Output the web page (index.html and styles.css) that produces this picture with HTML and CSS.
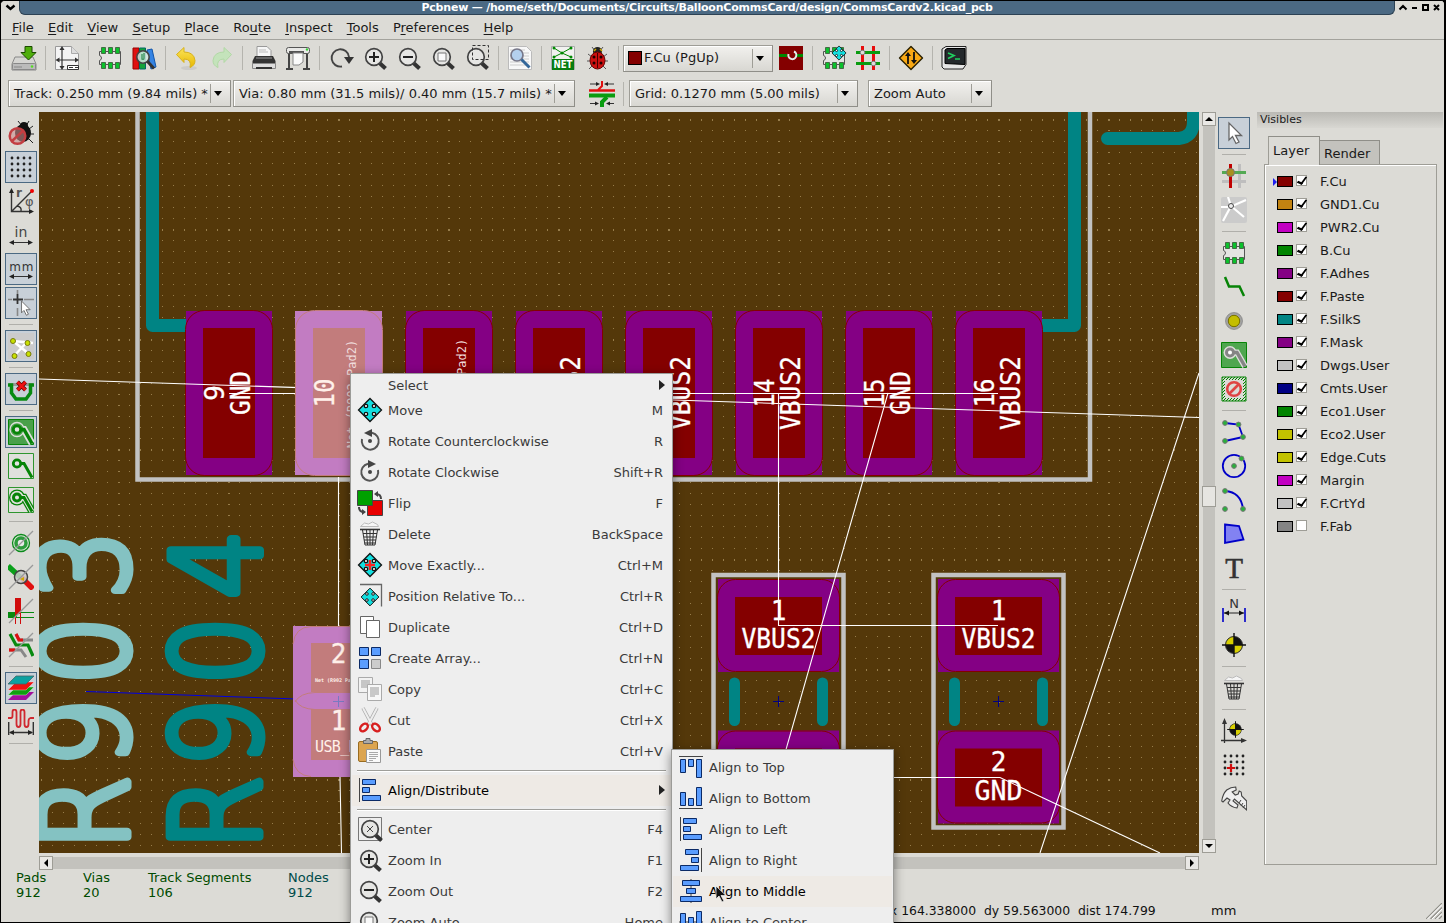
FILE: index.html
```
<!DOCTYPE html>
<html lang="en">
<head>
<meta charset="utf-8">
<title>Pcbnew</title>
<link rel="stylesheet" href="styles.css">
</head>
<body>
<svg class="sprite" width="0" height="0">
<defs>
<linearGradient id="gy" x1="0" y1="0" x2="0" y2="1"><stop offset="0" stop-color="#fae45a"/><stop offset="1" stop-color="#e9b800"/></linearGradient>
<pattern id="hatch" width="3" height="3" patternUnits="userSpaceOnUse"><path d="M0 3L3 0" stroke="#008400" stroke-width="1"/></pattern>
</defs>
<symbol id="save" viewBox="0 0 26 26"><path d="M4 12h18l3 7v6H1v-6z" fill="#d5d5d2" stroke="#888" /><rect x="1.500" y="18.500" width="23" height="6" rx="1" fill="#bbb" stroke="#888"/><path d="M4 21v2m2-2v2m2-2v2m2-2v2" stroke="#888"/><circle cx="21" cy="21.500" r="1.200" fill="#5d2"/><path d="M14 1.500h7v6h4l-7.500 7.500L10 7.500h4z" fill="#4fae0c" stroke="#1b4a00"/></symbol>
<symbol id="page" viewBox="0 0 26 26"><path d="M1.500 1.500h16l7 7v16h-23z" fill="#f4f4f4" stroke="#999"/><path d="M17.500 1.500v7h7" fill="#ddd" stroke="#aaa"/><path d="M8 3v20M3 15h20" stroke="#333" stroke-width="1.200"/><path d="M8 1l2.500 4h-5zM8 25l2.500-4h-5zM1.500 15l4-2.500v5zM25 15l-4-2.500v5z" fill="#333"/><path d="M13.500 20.500h11v4h-11zM15 22.500h4m2 0h3" stroke="#333" fill="#fff"/></symbol>
<symbol id="chip" viewBox="0 0 26 26"><path d="M2.500 6.500h21v13h-21v-4q2-.5 2-2.500t-2-2.500z" fill="#e4e4e2" stroke="#555"/><g fill="#0bc12c" stroke="#456b45"><path d="M4.500 2.500h4v6h-4zM11.500 2.500h4v6h-4zM18.500 2.500h4v6h-4zM4.500 17.500h4v6h-4zM11.500 17.500h4v6h-4zM18.500 17.500h4v6h-4z"/></g></symbol>
<symbol id="lib" viewBox="0 0 26 26"><path d="M2 3h6v21H2z" fill="#e01010" stroke="#900"/><path d="M8.500 3h6v21h-6z" fill="#14a33a" stroke="#066"/><path d="M16 5l5-1 4 18-5 2z" fill="#3584e4" stroke="#15a"/><circle cx="12" cy="12" r="6.200" fill="#d2e8e2" fill-opacity=".85" stroke="#444" stroke-width="1.600"/><path d="M11 9v5q2 1 2-1V8" fill="none" stroke="#4a9a6a" stroke-width="1.500"/><path d="M16.500 16.500l6.500 7" stroke="#333" stroke-width="3"/></symbol>
<symbol id="undo" viewBox="0 0 26 26"><ellipse cx="15" cy="23" rx="8" ry="2" fill="#bbb" opacity=".5"/><path d="M2.500 9.500l7.500-7v4.500q10 0 11 8.500 0 5-5 7 2-8.500-6-8.500v3.500z" fill="url(#gy)" stroke="#d8b21a"/></symbol>
<symbol id="redo" viewBox="0 0 26 26"><g opacity=".45"><path d="M23.500 9.500l-7.500-7v4.500q-10 0-11 8.500 0 5 5 7-2-8.500 6-8.500v3.500z" fill="#a8ed9c" stroke="#7fd66b"/></g></symbol>
<symbol id="print" viewBox="0 0 26 26"><path d="M6 1.500h10l4 4v8H6z" fill="#f6f6f6" stroke="#999"/><path d="M8 5h7M8 7h9" stroke="#bbb"/><path d="M4 11h18l2.500 5v3h-23v-3z" fill="#333"/><path d="M5 13h16" stroke="#999"/><path d="M1.500 18.500h23v5h-23z" fill="#ddd" stroke="#888"/><path d="M5 23h16" stroke="#333" stroke-width="2"/></symbol>
<symbol id="plot" viewBox="0 0 26 26"><path d="M4 6v18M22 6v18M1 24h7M18 24h7" stroke="#444" stroke-width="2"/><rect x="1.500" y="2.500" width="23" height="6" rx="2" fill="#e8e8e6" stroke="#555"/><path d="M4 7h15" stroke="#222" stroke-width="1.500"/><circle cx="22" cy="4.500" r="1.200" fill="#3c3"/><path d="M8 8h10v9l-4 3H8z" fill="#fafafa" stroke="#888"/></symbol>
<symbol id="refresh" viewBox="0 0 26 26"><path d="M14 21.500A8.700 8.700 0 1 1 21 12" fill="none" stroke="#444" stroke-width="1.900"/><path d="M16 12h10l-5 7z" fill="#333"/></symbol>
<symbol id="mag" viewBox="0 0 26 26"><path d="M17.500 18l6 5.500" stroke="#333" stroke-width="4"/><circle cx="12" cy="12" r="8.300" fill="#e6e6e4" stroke="#444" stroke-width="1.700"/></symbol>
<symbol id="zin" viewBox="0 0 26 26"><use href="#mag"/><path d="M7 12h10m-5-5v10" stroke="#222" stroke-width="2"/></symbol>
<symbol id="zout" viewBox="0 0 26 26"><use href="#mag"/><path d="M7 12h10" stroke="#222" stroke-width="2"/></symbol>
<symbol id="zfit" viewBox="0 0 26 26"><use href="#mag"/><path d="M8 8h8v8H8z" fill="#fafafa" stroke="#777"/></symbol>
<symbol id="zsel" viewBox="0 0 26 26"><use href="#mag"/><path d="M8.500.500h16v14h-16z" fill="none" stroke="#333" stroke-dasharray="3 2"/></symbol>
<symbol id="zcen" viewBox="0 0 26 26"><path d="M1.500 1.500h23v23h-23z" fill="none" stroke="#777"/><use href="#mag" x="1" y="1"/><path d="M10 10l6 6m0-6l-6 6" stroke="#444"/></symbol>
<symbol id="find" viewBox="0 0 26 26"><path d="M1.500 1.500h18l5 5v18h-23z" fill="#f8f8f8" stroke="#bbb"/><path d="M3 5h15M3 8h19M3 11h19M3 14h19M3 17h19M3 20h19" stroke="#ccc"/><circle cx="10" cy="10" r="6" fill="#b4d0ee" stroke="#778" stroke-width="1.700"/><path d="M14.500 14.500l8 8" stroke="#369" stroke-width="3"/></symbol>
<symbol id="lady" viewBox="0 0 26 26"><path d="M8 2l3 4M19 2l-3 4M4 9l4 3M23 9l-4 3M3 16h4M24 16h-4M5 24l4-4M22 24l-4-4" stroke="#555"/><circle cx="13.500" cy="6.500" r="4.500" fill="#222"/><ellipse cx="13.500" cy="15.500" rx="7.500" ry="8.500" fill="#cc1010" stroke="#600"/><path d="M13.500 8v15" stroke="#400"/><g fill="#200"><circle cx="10" cy="12" r="1.500"/><circle cx="17" cy="12" r="1.500"/><circle cx="10" cy="18" r="1.500"/><circle cx="17" cy="18" r="1.500"/></g><path d="M10 6l2-2m4 0l2 2" stroke="#ca0" stroke-width="1.500"/></symbol>
<symbol id="pair" viewBox="0 0 26 26"><path d="M1 1h24v24H1z" fill="#840000"/><path d="M1 10.500h8M17 10.500h8" stroke="#080" stroke-width="3"/><path d="M16 6.500a4 4 0 1 1-5.500 2.500" fill="none" stroke="#e8e8e8" stroke-width="2"/></symbol>
<symbol id="movex" viewBox="0 0 26 26"><path d="M13 1.500l11.500 11.500L13 24.500 1.500 13z" fill="#12dfe0" stroke="#111" stroke-width="1.300"/><g fill="#fff" stroke="#111" stroke-width="1.300"><circle cx="9" cy="9" r="1.700"/><circle cx="17" cy="9" r="1.700"/><circle cx="9" cy="17" r="1.700"/><circle cx="17" cy="17" r="1.700"/></g></symbol>
<symbol id="movey" viewBox="0 0 26 26"><use href="#movex"/><path d="M13 8v10M8 13h10" stroke="#ff2020" stroke-width="2.500"/></symbol>
<symbol id="posrel" viewBox="0 0 26 26"><path d="M3 1.500h21.500v22" fill="none" stroke="#666" stroke-width="1.300"/><use href="#movex" x="3" y="4" width="20" height="20"/></symbol>
<symbol id="chipm" viewBox="0 0 26 26"><use href="#chip"/><use href="#movex" x="10" y="0" width="16" height="16"/></symbol>
<symbol id="route" viewBox="0 0 26 26"><path d="M7.500 1v24M18.500 1v24" stroke="#e80c0c" stroke-width="3"/><path d="M1 7.500h24M1 18.500h24" stroke="#0a9c10" stroke-width="3"/><circle cx="7.500" cy="7.500" r="2.300" fill="#ddd" stroke="#777"/><circle cx="18.500" cy="18.500" r="2.300" fill="#ddd" stroke="#777"/></symbol>
<symbol id="warn" viewBox="0 0 26 26"><path d="M13 1.500L24.500 13 13 24.500 1.500 13z" fill="#f9a814" stroke="#2a2000" stroke-width="1.400" stroke-linejoin="round"/><path d="M10 19V10M16 7v9" stroke="#111" stroke-width="1.800"/><path d="M7 11l3-4 3 4zM13 15l3 4 3-4z" fill="#111"/></symbol>
<symbol id="term" viewBox="0 0 26 26"><path d="M5 1.500h20v18L22 24H3l-2-2V4z" fill="#e6e6e6" stroke="#222"/><path d="M6 3.500h18v16l-20-1V5z" fill="#24292c" stroke="#000"/><path d="M7 8l6 2.500-6 3M14 14h5" fill="none" stroke="#20d060" stroke-width="1.700"/></symbol>
<symbol id="width" viewBox="0 0 26 26"><path d="M0 9.500h26" stroke="#e01010" stroke-width="2.500"/><path d="M0 14.500h26" stroke="#0a9c10" stroke-width="4"/><path d="M13 0v5l-4 4" stroke="#e01010" stroke-width="2" fill="none"/><path d="M13 26v-5l5-5" stroke="#0a9c10" stroke-width="4" fill="none"/><path d="M1 3h8M25 3h-8M1 22.500h8M25 22.500h-6" stroke="#333"/><path d="M11 3L7 1v4zM15 3l4-2v4zM10 22.500l-4-2v4zM17 22.500l4-2v4z" fill="#222"/></symbol>
<symbol id="nobug" viewBox="0 0 26 26"><path d="M10 1l4 5M21 1l-3 5M21 9l4-3M22 14h4M21 19l4 4" stroke="#222"/><circle cx="16" cy="6" r="4" fill="#111"/><ellipse cx="15" cy="13" rx="8" ry="9" fill="#111"/><circle cx="9.500" cy="16" r="7.800" fill="#c88" fill-opacity=".6" stroke="#c33e42" stroke-width="2.500"/><path d="M4 21L15 11" stroke="#c33e42" stroke-width="2.500"/></symbol>
<symbol id="dots" viewBox="0 0 26 26"><path d="M4 4h.01M10 4h.01M16 4h.01M22 4h.01M4 10h.01M10 10h.01M16 10h.01M22 10h.01M4 16h.01M10 16h.01M16 16h.01M22 16h.01M4 22h.01M10 22h.01M16 22h.01M22 22h.01" stroke="#222" stroke-width="2.800" stroke-linecap="round"/></symbol>
<symbol id="arr" viewBox="0 0 26 26"><path d="M3 20.500h20" stroke="#333"/><path d="M1 20.500L6 18v5zM25 20.500L20 18v5z" fill="#222"/></symbol>
<symbol id="ptr" viewBox="0 0 26 26"><path d="M8 3v17l3.500-3.500 3.500 7 3-1.500-3.500-6.500h6z" fill="#fff" stroke="#666" stroke-width="1.300"/></symbol>
<symbol id="cross" viewBox="0 0 26 26"><path d="M9.500 0v4m0 14v8M0 9.500h4m12 0h10" stroke="#888" stroke-width="1.600"/><path d="M9.500 4v10M5 9.500h10" stroke="#333" stroke-width="1.800"/><use href="#ptr" x="8" y="9" width="18" height="18"/></symbol>
<symbol id="rats" viewBox="0 0 26 26"><path d="M0 0h26v26H0z" fill="#cbcbcb"/><path d="M5 8l20 2M5 8l16 13M19 9L6 23" stroke="#fff" stroke-width="2.500"/><g fill="#c8e000" stroke="#777a10"><circle cx="5" cy="8" r="2.500"/><circle cx="19.500" cy="10" r="2.500"/><circle cx="20.500" cy="21" r="2.500"/><circle cx="6.500" cy="23" r="2.500"/></g></symbol>
<symbol id="ux" viewBox="0 0 26 26"><path d="M1 8.500h24" stroke="#999" stroke-width="3"/><path d="M0 9h3.500v8l4.500 6h10l4.500-6V9H26" fill="none" stroke="#078a10" stroke-width="3.500"/><path d="M9.500 6l8 8m0-8l-8 8" stroke="#600" stroke-width="4"/><path d="M9.500 6l8 8m0-8l-8 8" stroke="#e11" stroke-width="2.500"/></symbol>
<symbol id="zone1" viewBox="0 0 26 26"><path d="M.5.500h25v25H.5z" fill="#4aa04a" stroke="#078407"/><path d="M9 10.500h7l8 14" fill="none" stroke="#dedfdc" stroke-width="7"/><circle cx="9" cy="10.500" r="7" fill="#4aa04a" stroke="#dedfdc" stroke-width="1.300"/><path d="M9 10.500h7l8 14" fill="none" stroke="#078407" stroke-width="3.500"/><circle cx="9" cy="10.500" r="3.700" fill="#e5e5e2" stroke="#078407" stroke-width="2.800"/></symbol>
<symbol id="zone2" viewBox="0 0 26 26"><path d="M.5.500h25v25H.5z" fill="#e0e0dc" stroke="#2f962f"/><path d="M9 10.500h7l8 14" fill="none" stroke="#078407" stroke-width="3"/><circle cx="9" cy="10.500" r="3.700" fill="#e5e5e2" stroke="#078407" stroke-width="2.800"/></symbol>
<symbol id="zone3" viewBox="0 0 26 26"><path d="M.5.500h25v25H.5z" fill="#e0e0dc" stroke="#2f962f"/><path d="M9 10.500h7l8 14" fill="none" stroke="#078407" stroke-width="7.500"/><circle cx="9" cy="10.500" r="8" fill="#078407"/><path d="M9 10.500h7l8 14" fill="none" stroke="#e0e0dc" stroke-width="5"/><circle cx="9" cy="10.500" r="6.700" fill="#e0e0dc"/><path d="M9 10.500h7l8 14" fill="none" stroke="#078407" stroke-width="3"/><circle cx="9" cy="10.500" r="3.500" fill="#e5e5e2" stroke="#078407" stroke-width="3"/></symbol>
<symbol id="sl" viewBox="0 0 26 26"><path d="M1 25L25 1" stroke="#999" stroke-width="1.300"/></symbol>
<symbol id="via" viewBox="0 0 26 26"><circle cx="13" cy="13" r="8.500" fill="#d9e5d5" stroke="#0a8a1a" stroke-width="1.300"/><circle cx="13" cy="13" r="5" fill="#e8e8e8" stroke="#2d9c3c" stroke-width="3.500"/><use href="#sl"/></symbol>
<symbol id="trk" viewBox="0 0 26 26"><path d="M0 2l12 11" stroke="#0aa01a" stroke-width="5.500"/><path d="M13 13l12 12" stroke="#e01010" stroke-width="5.500"/><circle cx="13" cy="13" r="6.500" fill="#ccc" fill-opacity=".85" stroke="#444" stroke-width="1.500"/><path d="M12 15l4-2v4z" fill="#ca0"/><use href="#sl"/></symbol>
<symbol id="crs" viewBox="0 0 26 26"><path d="M0 17h9" stroke="#078a10" stroke-width="6"/><path d="M9 14.500h17M9 19.500h17" stroke="#078a10"/><path d="M10 0v16" stroke="#d00c0c" stroke-width="6"/><path d="M7.500 15v11M12.500 15v11" stroke="#d00c0c"/><use href="#sl"/></symbol>
<symbol id="dp" viewBox="0 0 26 26"><path d="M8 2l3 6h14" fill="none" stroke="#888" stroke-width="3"/><path d="M8 2l3 6h4" fill="none" stroke="#d11" stroke-width="3.200"/><path d="M1 18h12l5 7" fill="none" stroke="#888" stroke-width="3"/><path d="M1 18h6" stroke="#d11" stroke-width="3.200"/><path d="M2 2l6 11h12l5 11" fill="none" stroke="#078a10" stroke-width="3.200"/><use href="#sl"/></symbol>
<symbol id="stack" viewBox="0 0 26 26"><path d="M8 17h18l-8 8H0z" fill="#a2109c"/><path d="M8 12h18l-8 8H0z" fill="#10a010" stroke="#dfd" stroke-width=".4"/><path d="M8 7h18l-8 8H0z" fill="#f01010" stroke="#fdd" stroke-width=".4"/><path d="M8 1h18l-8 8H0z" fill="#0da0a0" stroke="#466" stroke-width=".8"/></symbol>
<symbol id="wave" viewBox="0 0 26 26"><path d="M0 9h3q1.500 0 1.500-2V3q0-2.500 2-2.500T8.500 3v12q0 3 2 3t2-3V3q0-2.500 2-2.500t2 2.500v12q0 3 2 3t2-3v-3q0-2.500 2-3H26" fill="none" stroke="#d02830" stroke-width="1.800"/><path d="M.7 13v13M25.300 13v13M2 23.500h22" stroke="#333" stroke-width="1.400"/><path d="M1 23.500l5-2.500v5zM25 23.500l-5-2.500v5z" fill="#222"/></symbol>
<symbol id="netx" viewBox="0 0 26 26"><path d="M18.500 1v24M1 18.500h24" stroke="#bebebe" stroke-width="3"/><path d="M1 9.500h24" stroke="#54aa54" stroke-width="3"/><path d="M9.500 1v24" stroke="#c00000" stroke-width="3"/><circle cx="9.500" cy="9.500" r="4" fill="#a89020" stroke="#777"/></symbol>
<symbol id="lrat" viewBox="0 0 26 26"><rect width="26" height="26" rx="2" fill="#cbcbcb"/><path d="M0 10h9L25 3M10 9l13 11M10 9L2 24M10 9L7 0" stroke="#fff" stroke-width="2.200" fill="none"/><circle cx="10" cy="9" r="2.500" fill="#eee" stroke="#444"/></symbol>
<symbol id="track" viewBox="0 0 26 26"><path d="M4 3l4 9.500h10.500L23 22" fill="none" stroke="#078407" stroke-width="2.500"/></symbol>
<symbol id="vy" viewBox="0 0 26 26"><circle cx="13" cy="13" r="7.200" fill="#c4be00" stroke="#a2a2a2" stroke-width="2.600"/><circle cx="13" cy="13" r="8.500" fill="none" stroke="#777" stroke-width=".6"/><circle cx="13" cy="13" r="5.700" fill="none" stroke="#777000" stroke-width="1"/></symbol>
<symbol id="zadd" viewBox="0 0 26 26"><path d="M.5.500h25v25H.5z" fill="#4fa64f" stroke="#078407"/><path d="M9 10.500h7l8 14" fill="none" stroke="#dedfdc" stroke-width="6"/><circle cx="9" cy="10.500" r="6.500" fill="#dedfdc"/><path d="M9 10.500h7l8 14" fill="none" stroke="#858585" stroke-width="3.500"/><circle cx="9" cy="10.500" r="3.500" fill="#fff" stroke="#858585" stroke-width="3"/></symbol>
<symbol id="keep" viewBox="0 0 26 26"><path d="M1 1h24v24H1z" fill="url(#hatch)" stroke="#078407"/><path d="M4 4h18v18H4z" fill="#dcdbd7"/><circle cx="13" cy="13" r="6.800" fill="none" stroke="#df4444" stroke-width="2.600"/><path d="M8 18L18 8" stroke="#df4444" stroke-width="2.600"/></symbol>
<symbol id="line" viewBox="0 0 26 26"><path d="M4 4l13.500 1.500L22 18 4 22" fill="none" stroke="#0000c8" stroke-width="1.800"/><g fill="#29b03b" stroke="#777"><circle cx="4" cy="4" r="2.400"/><circle cx="17.500" cy="5.500" r="2.400"/><circle cx="22" cy="18" r="2.400"/><circle cx="4" cy="22" r="2.400"/></g></symbol>
<symbol id="circ" viewBox="0 0 26 26"><circle cx="13" cy="13" r="11.200" fill="none" stroke="#0000c8" stroke-width="1.800"/><g fill="#29b03b" stroke="#777"><circle cx="13" cy="13" r="2.400"/><circle cx="20.500" cy="5.500" r="2.400"/></g></symbol>
<symbol id="arc" viewBox="0 0 26 26"><path d="M4 4q16 1 18 18" fill="none" stroke="#0000c8" stroke-width="1.800"/><g fill="#29b03b" stroke="#777"><circle cx="4" cy="4" r="2.400"/><circle cx="22" cy="22" r="2.400"/><circle cx="4" cy="22" r="2.400"/></g></symbol>
<symbol id="poly" viewBox="0 0 26 26"><path d="M4 3.500L18 5l4.500 13.500L4 22z" fill="#8282f2" stroke="#0000c8" stroke-width="1.800"/></symbol>
<symbol id="tgt" viewBox="0 0 26 26"><circle cx="13" cy="13" r="8.500" fill="#111"/><path d="M13 13V4.500A8.500 8.500 0 0 0 4.500 13zM13 13v8.500A8.500 8.500 0 0 0 21.500 13z" fill="#d8d000"/><circle cx="13" cy="13" r="8.500" fill="none" stroke="#333"/><path d="M13 1v24M1 13h24" stroke="#111" stroke-width="1.400"/></symbol>
<symbol id="bin" viewBox="0 0 26 26"><path d="M3.500 5.500l4-3.500 4 1 4-2 5 2.500 1 2z" fill="#f5f5f5" stroke="#bbb"/><path d="M3 8.500h20" stroke="#333" stroke-width="1.600"/><path d="M5.500 9l2.500 15h10l2.500-15M6 12.500h14M7 16h12.500M7 19h12M7.500 22h11M9.500 9l1 15M13 9v15M16.500 9l-1 15" fill="none" stroke="#333" stroke-width="1"/></symbol>
<symbol id="orig" viewBox="0 0 26 26"><path d="M3.500 3v22M0 22.500h23" stroke="#333" stroke-width="1.300"/><path d="M3.500 0L6 6H1zM26 22.500L20 20v5z" fill="#333"/><use href="#tgt" x="5.500" y="2.500" width="18" height="18"/></symbol>
<symbol id="gorg" viewBox="0 0 26 26"><use href="#dots"/><path d="M10 12v8M6 16h8" stroke="#d10c0c" stroke-width="2.200"/></symbol>
<symbol id="cal" viewBox="0 0 26 26"><path d="M.7 15q1-7 5-11 4-3 9-3l.5 3-4 2 3 3 3-1 1-3 2 1 .5 4 5 5v9L13.500 13l-1.500 2 5 4-1 3q-6-1-9-5l2-3-3-2-4 4z" fill="#eee" stroke="#444" stroke-width="1.100"/><path d="M20 14l-2 3m4 0l-2 3m4-1l-2 3" stroke="#444"/></symbol>
<symbol id="ccw" viewBox="0 0 26 26"><path d="M5 11A8.500 8.500 0 1 0 15 4.800" fill="none" stroke="#555" stroke-width="2"/><path d="M7 5l8-4v8z" fill="#444"/><circle cx="13" cy="13" r="2" fill="#444"/></symbol>
<symbol id="cw" viewBox="0 0 26 26"><path d="M21 11A8.500 8.500 0 1 1 11 4.800" transform="translate(0 0)" fill="none" stroke="#555" stroke-width="2"/><path d="M19 5l-8-4v8z" fill="#444"/><circle cx="13" cy="13" r="2" fill="#444"/></symbol>
<symbol id="flip" viewBox="0 0 26 26"><path d="M10.500 10.500h15v15h-15z" fill="#e80000" stroke="#444"/><path d="M.5.500h15v15H.5z" fill="#00a000" stroke="#444"/><path d="M24 9q0-5-5-5M2 17q0 5 5 5" fill="none" stroke="#444" stroke-width="2"/><path d="M17 4l4-3v6zM9 22l-4-3v6z" fill="#444"/></symbol>
<symbol id="dup" viewBox="0 0 26 26"><path d="M3.500 2.500h13v17h-13z" fill="#fff" stroke="#666"/><path d="M9.500 6.500h13v17h-13z" fill="#fff" stroke="#666"/></symbol>
<symbol id="array" viewBox="0 0 26 26"><g fill="#5a9dff" stroke="#0b2a66"><path d="M2.500 2.500h9v8h-9zM14.500 2.500h9v8h-9zM2.500 14.500h9v9h-9z"/></g><path d="M14.500 14.500h9v9h-9z" fill="#ccc" stroke="#888"/></symbol>
<symbol id="copy" viewBox="0 0 26 26"><path d="M1.500 1.500h14v15h-14z" fill="#f2f2f2" stroke="#aaa"/><path d="M4 5h9M4 7h9M4 9h9M4 11h9" stroke="#999"/><path d="M10.500 8.500h14v16h-14z" fill="#f7f7f7" stroke="#aaa"/><path d="M13 12h9M13 14h9M13 16h9M13 18h9M13 20h5" stroke="#999"/></symbol>
<symbol id="cut" viewBox="0 0 26 26"><path d="M6 1l9 17M20 1l-9 17" stroke="#aaa" stroke-width="3.500"/><path d="M6 1l9 17M20 1l-9 17" stroke="#eee" stroke-width="2"/><ellipse cx="7" cy="20.500" rx="3" ry="4.500" transform="rotate(45 7 20.500)" fill="none" stroke="#d82020" stroke-width="2.500"/><ellipse cx="19" cy="20.500" rx="3" ry="4.500" transform="rotate(-45 19 20.500)" fill="none" stroke="#d82020" stroke-width="2.500"/></symbol>
<symbol id="paste" viewBox="0 0 26 26"><rect x="1.500" y="3.500" width="19" height="20" rx="1.500" fill="#dca550" stroke="#996c20"/><path d="M6.500 5.500V2.500h2.500V.5h4v2h2.500v3z" fill="#aaa" stroke="#666"/><path d="M9.500 11.500h14v13h-14z" fill="#fafafa" stroke="#999"/><path d="M12 14.500h9M12 16.500h9M12 18.500h9M12 20.500h7M12 22.500h4" stroke="#aaa"/></symbol>
<symbol id="al" viewBox="0 0 26 26"><path d="M2.500 1v24" stroke="#444"/><path d="M5.500 2.500h13v5h-13zM5.500 10.500h7v5h-7zM5.500 18.500h18v5h-18z" fill="#5a9dff" stroke="#0b2a66"/></symbol>
<symbol id="ar" viewBox="0 0 26 26"><use href="#al" transform="matrix(-1 0 0 1 26 0)"/></symbol>
<symbol id="at" viewBox="0 0 26 26"><path d="M1 2.500h24" stroke="#444"/><path d="M2.500 5.500h5v13h-5zM10.500 5.500h5v7h-5zM18.500 5.500h5v18h-5z" fill="#5a9dff" stroke="#0b2a66"/></symbol>
<symbol id="abt" viewBox="0 0 26 26"><path d="M1 23.500h24" stroke="#444"/><path d="M2.500 7.500h5v13h-5zM10.500 13.500h5v7h-5zM18.500 2.500h5v18h-5z" fill="#5a9dff" stroke="#0b2a66"/></symbol>
<symbol id="am" viewBox="0 0 26 26"><path d="M13 1v24" stroke="#444"/><path d="M4.500 2.500h17v5h-17zM8.500 10.500h9v5h-9zM2.500 18.500h21v5h-21z" fill="#5a9dff" stroke="#0b2a66"/></symbol>
<symbol id="ac" viewBox="0 0 26 26"><path d="M1 13h24" stroke="#444"/><path d="M2.500 4.500h5v17h-5zM10.500 8.500h5v9h-5zM18.500 2.500h5v21h-5z" fill="#5a9dff" stroke="#0b2a66"/></symbol>
</svg>

<div class="window">
<header class="titlebar">
  <div class="corner"><svg width="18" height="14" viewBox="0 0 18 14"><path d="M5.500 4.500l4 3.500 4-3.500" fill="none" stroke="#000" stroke-width="2.400"/></svg></div>
  <div class="title"><span>Pcbnew — /home/seth/Documents/Circuits/BalloonCommsCard/design/CommsCardv2.kicad_pcb</span></div>
  <div class="corner right"><svg width="48" height="14" viewBox="0 0 48 14"><path d="M4.500 8.500L8 5l3.500 3.500M17 7h5M28 4h5v5h-5zM39 4l5 5m0-5l-5 5" fill="none" stroke="#000" stroke-width="2"/></svg></div>
</header>
<nav class="menubar"><span><u>F</u>ile</span><span><u>E</u>dit</span><span><u>V</u>iew</span><span><u>S</u>etup</span><span><u>P</u>lace</span><span>Ro<u>u</u>te</span><span><u>I</u>nspect</span><span><u>T</u>ools</span><span>P<u>r</u>eferences</span><span><u>H</u>elp</span></nav>
<div class="toolbar">
<svg class="ic"><use href="#save"/></svg><i></i><svg class="ic"><use href="#page"/></svg><i></i><svg class="ic"><use href="#chip"/></svg><svg class="ic"><use href="#lib"/></svg><i></i><svg class="ic"><use href="#undo"/></svg><svg class="ic"><use href="#redo"/></svg><i></i><svg class="ic"><use href="#print"/></svg><svg class="ic"><use href="#plot"/></svg><i></i><svg class="ic"><use href="#refresh"/></svg><svg class="ic"><use href="#zin"/></svg><svg class="ic"><use href="#zout"/></svg><svg class="ic"><use href="#zfit"/></svg><svg class="ic"><use href="#zsel"/></svg><i></i><svg class="ic"><use href="#find"/></svg><i></i>
<svg class="ic" viewBox="0 0 26 26"><path d="M1.500 1.500h23v23h-23z" fill="#f2f2f0" stroke="#aaa"/><path d="M4 3l8 5 9-5M12 8L4 12M12 8l9 4" fill="none" stroke="#080"/><g fill="#080"><circle cx="4" cy="3" r="1.500"/><circle cx="21" cy="3" r="1.500"/><circle cx="12" cy="8" r="1.500"/><circle cx="4" cy="12" r="1.500"/><circle cx="21" cy="12" r="1.500"/></g><path d="M2 14h22v11H2z" fill="#087c10"/><text x="13" y="23" font-size="10" font-weight="bold" text-anchor="middle" fill="#fff" textLength="19" lengthAdjust="spacingAndGlyphs">NET</text></svg>
<svg class="ic"><use href="#lady"/></svg><i></i>
<div class="combo layer"><b class="swatch fcu"></b><span>F.Cu (PgUp)</span><em></em></div>
<svg class="ic"><use href="#pair"/></svg><i></i><svg class="ic"><use href="#chipm"/></svg><svg class="ic"><use href="#route"/></svg><i></i><svg class="ic"><use href="#warn"/></svg><i></i><svg class="ic"><use href="#term"/></svg>
</div>
<div class="toolbar second">
<div class="combo track"><span>Track: 0.250 mm (9.84 mils) *</span><em></em></div>
<div class="combo viasel"><span>Via: 0.80 mm (31.5 mils)/ 0.40 mm (15.7 mils) *</span><em></em></div>
<svg class="ic"><use href="#width"/></svg><i></i>
<div class="combo grid"><span>Grid: 0.1270 mm (5.00 mils)</span><em></em></div>
<i class="gap"></i>
<div class="combo zoomsel"><span>Zoom Auto</span><em></em></div>
</div>

<main class="work">
<aside class="tools">
<svg class="ic"><use href="#nobug"/></svg><svg class="ic on"><use href="#dots"/></svg>
<svg class="ic" viewBox="0 0 26 26"><path d="M3.500 2v21.500H24M3.500 23.500L23 4M9 18q5 1 4 5" stroke="#333" stroke-width="1.400" fill="none"/><path d="M3.500 0L6 5H1zM26 23.500L21 21v5z" fill="#222"/><circle cx="24" cy="3" r="2" fill="#f00000"/><text x="8" y="9" font-size="12" font-weight="bold" fill="#555">r</text><text x="17" y="18" font-size="13" fill="#555">φ</text></svg>
<svg class="ic" viewBox="0 0 26 26"><text x="13" y="15" font-size="14" text-anchor="middle" fill="#444">in</text><use href="#arr" width="26" height="26"/></svg>
<svg class="ic on" viewBox="0 0 26 26"><text x="7" y="15" font-size="12" text-anchor="middle" fill="#333">m</text><text x="19.500" y="15" font-size="12" text-anchor="middle" fill="#333">m</text><use href="#arr" width="26" height="26"/></svg>
<svg class="ic on"><use href="#cross"/></svg><i></i><svg class="ic on"><use href="#rats"/></svg><i></i><svg class="ic on"><use href="#ux"/></svg><i></i><svg class="ic on"><use href="#zone1"/></svg><svg class="ic"><use href="#zone2"/></svg><svg class="ic"><use href="#zone3"/></svg><i></i><svg class="ic"><use href="#via"/></svg><svg class="ic"><use href="#trk"/></svg><svg class="ic"><use href="#crs"/></svg><svg class="ic"><use href="#dp"/></svg><i></i><svg class="ic on"><use href="#stack"/></svg><svg class="ic"><use href="#wave"/></svg><i></i>
</aside>
<section class="view">
<svg class="board" viewBox="39 112 1160 741" width="1160" height="741">
<defs>
<pattern id="dotgrid" x="118" y="119" width="110" height="110" patternUnits="userSpaceOnUse">
<g fill="none" stroke="#977d4b">
<path d="M0 1h2" stroke-width="2"/>
<path d="M11 1h99" stroke-width="2" stroke-dasharray="1 10"/>
<path d="M0 11.500h2M0 22.500h2M0 33.500h2M0 44.500h2M0 55.500h2M0 66.500h2M0 77.500h2M0 88.500h2M0 99.500h2"/>
<path d="M11 11.500h99M11 22.500h99M11 33.500h99M11 44.500h99M11 55.500h99M11 66.500h99M11 77.500h99M11 88.500h99M11 99.500h99" stroke-dasharray="1 10"/>
</g></pattern>
<g id="pin"><path d="M186 311h86v164h-86z" fill="#840084"/><path d="M203 328h52v130h-52z" fill="#840000"/><rect x="185.500" y="310.500" width="87" height="165" rx="19" fill="none" stroke="#840000"/></g>
<g id="cpad"><path d="M718 579h121v93H718z" fill="#840084"/><path d="M735 597h87v58h-87z" fill="#840000"/><rect x="717.500" y="579.500" width="122" height="92" rx="18" fill="none" stroke="#840000"/></g>
<g id="cap"><rect x="713.500" y="575" width="130" height="252.500" fill="none" stroke="#c2c2c2" stroke-width="4.500"/><use href="#cpad"/><use href="#cpad" y="151.500"/><path d="M734.500 683v37.500M822.500 683v37.500" stroke="#008484" stroke-width="11" stroke-linecap="round"/><path d="M773 701.500h11M778.500 696v11" stroke="#000084"/></g>
</defs>
<path d="M39 112h1160v741H39z" fill="#54380a"/>
<path d="M39 112h1160v741H39z" fill="url(#dotgrid)"/>
<g fill="none" stroke="#008484" stroke-width="13" stroke-linejoin="round" stroke-linecap="round">
<path d="M152.500 100V325.500H190M1074.500 100V325.500H1042M1107.500 138.500H1179Q1193.500 137 1193.500 121V100"/></g>
<path d="M137.500 100V479.500H1090V100" fill="none" stroke="#c2c2c2" stroke-width="4.500"/>
<g class="silk">
<text class="pale" transform="translate(126.500 843) rotate(-90) scale(.88 1)" x="-8 87 180 278">R903</text>
<text transform="translate(258.500 843) rotate(-90) scale(.88 1)" x="-8 87 180 278">R904</text>
</g>
<use href="#pin"/><use href="#pin" x="220"/><use href="#pin" x="330"/><use href="#pin" x="440"/><use href="#pin" x="550"/><use href="#pin" x="660"/><use href="#pin" x="770"/>
<use href="#cap"/><use href="#cap" x="220"/>
<path d="M86 691.500L296 699" stroke="#0000e0" fill="none"/>
<g class="pads">
<text transform="translate(224 393) rotate(-90)">9</text><text transform="translate(250 393) rotate(-90)" textLength="44" lengthAdjust="spacingAndGlyphs">GND</text>
<text transform="translate(580 393) rotate(-90)" textLength="74" lengthAdjust="spacingAndGlyphs">VBUS2</text>
<text transform="translate(690 393) rotate(-90)" textLength="74" lengthAdjust="spacingAndGlyphs">VBUS2</text>
<text transform="translate(774 393) rotate(-90)" textLength="29" lengthAdjust="spacingAndGlyphs">14</text><text transform="translate(800 393) rotate(-90)" textLength="74" lengthAdjust="spacingAndGlyphs">VBUS2</text>
<text transform="translate(884 393) rotate(-90)" textLength="29" lengthAdjust="spacingAndGlyphs">15</text><text transform="translate(910 393) rotate(-90)" textLength="44" lengthAdjust="spacingAndGlyphs">GND</text>
<text transform="translate(994 393) rotate(-90)" textLength="29" lengthAdjust="spacingAndGlyphs">16</text><text transform="translate(1020 393) rotate(-90)" textLength="74" lengthAdjust="spacingAndGlyphs">VBUS2</text>
<text class="tiny" transform="translate(466 393) rotate(-90)">Net-(R903-Pad2)</text>
<text x="778.500" y="620">1</text><text x="778.500" y="648" textLength="74" lengthAdjust="spacingAndGlyphs">VBUS2</text>
<text x="998.500" y="620">1</text><text x="998.500" y="648" textLength="74" lengthAdjust="spacingAndGlyphs">VBUS2</text>
<text x="998.500" y="771">2</text><text x="998.500" y="800" textLength="48" lengthAdjust="spacingAndGlyphs">GND</text>
</g>
<g fill="none" stroke="#fff" stroke-width="1.100">
<path d="M39 379L1199 417.500M229 393.500H998M778.500 393V625.500H998M888 393L778 777.500H1000L1160 853M1199 373L1040 853M338.500 477V700L341.500 853"/></g>
<path d="M295 311h87v164h-87z" fill="#c27cc2"/><path d="M313 328h52v130h-52z" fill="#c27c7c"/><rect x="295.500" y="310.500" width="87" height="165" rx="19" fill="none" stroke="#c27c7c"/>
<path d="M293 626h100v151H293z" fill="#c27cc2"/><path d="M311 643h80v49h-80zM311 709h80v51h-80z" fill="#c27c7c"/>
<path d="M293 644q2-17 18-17.500h60M311 776.500q-16-1-18-17M295 702q5-9 20-9.500h60M295 700q5 9 20 9.500h60" fill="none" stroke="#c27c7c"/>
<path d="M333 701.500h11M338.500 696v11" stroke="#7a7ac2"/>
<g class="pads sel">
<text transform="translate(334 393) rotate(-90)" textLength="29" lengthAdjust="spacingAndGlyphs">10</text>
<text class="tiny" transform="translate(356 394) rotate(-90)">Net-(R902-Pad2)</text>
<text x="338.500" y="663">2</text><text x="338.500" y="730">1</text>
<text class="micro" x="315" y="682">Net (R902 Pa</text><text class="small" x="315" y="752">USB_D</text>
</g>
</svg>
<div class="hscroll"><b class="sb l"></b><span></span><b class="sb r"></b></div>
</section>
<div class="vscroll"><b class="sb u"></b><span><b class="thumb"></b></span><b class="sb d"></b></div>
<aside class="tools rt">
<svg class="ic on"><use href="#ptr"/></svg><i></i><svg class="ic"><use href="#netx"/></svg><svg class="ic"><use href="#lrat"/></svg><i></i><svg class="ic"><use href="#chip"/></svg><svg class="ic"><use href="#track"/></svg><svg class="ic"><use href="#vy"/></svg><svg class="ic"><use href="#zadd"/></svg><svg class="ic"><use href="#keep"/></svg><i></i><svg class="ic"><use href="#line"/></svg><svg class="ic"><use href="#circ"/></svg><svg class="ic"><use href="#arc"/></svg><svg class="ic"><use href="#poly"/></svg>
<svg class="ic" viewBox="0 0 26 26"><text class="serif" x="13" y="22.500" text-anchor="middle" font-size="29" fill="#333" stroke="#333" stroke-width=".6">T</text></svg><i></i>
<svg class="ic" viewBox="0 0 26 26"><text x="13" y="10" text-anchor="middle" font-size="13" fill="#333">N</text><path d="M2 10v14M24 10v14" stroke="#0000c8" stroke-width="1.600"/><path d="M3 15h20" stroke="#222"/><path d="M3 15l5-2.500v5zM23 15l-5-2.500v5z" fill="#111"/></svg>
<svg class="ic"><use href="#tgt"/></svg><i></i><svg class="ic"><use href="#bin"/></svg><i></i><svg class="ic"><use href="#orig"/></svg><svg class="ic"><use href="#gorg"/></svg><svg class="ic"><use href="#cal"/></svg>
</aside>
<aside class="visibles">
<h2>Visibles</h2>
<div class="tabs"><span class="tab active">Layer</span><span class="tab">Render</span></div>
<ul class="layers">
<li class="cur"><b class="swatch fcu"></b><s class="ck"></s>F.Cu</li>
<li><b class="swatch gnd"></b><s class="ck"></s>GND1.Cu</li>
<li><b class="swatch mag"></b><s class="ck"></s>PWR2.Cu</li>
<li><b class="swatch grn"></b><s class="ck"></s>B.Cu</li>
<li><b class="swatch pur"></b><s class="ck"></s>F.Adhes</li>
<li><b class="swatch fcu"></b><s class="ck"></s>F.Paste</li>
<li><b class="swatch teal"></b><s class="ck"></s>F.SilkS</li>
<li><b class="swatch pur"></b><s class="ck"></s>F.Mask</li>
<li><b class="swatch gry"></b><s class="ck"></s>Dwgs.User</li>
<li><b class="swatch blu"></b><s class="ck"></s>Cmts.User</li>
<li><b class="swatch grn"></b><s class="ck"></s>Eco1.User</li>
<li><b class="swatch yel"></b><s class="ck"></s>Eco2.User</li>
<li><b class="swatch yel"></b><s class="ck"></s>Edge.Cuts</li>
<li><b class="swatch mag"></b><s class="ck"></s>Margin</li>
<li><b class="swatch gry"></b><s class="ck"></s>F.CrtYd</li>
<li><b class="swatch dgr"></b><s class="ck off"></s>F.Fab</li>
</ul>
</aside>
</main>
<footer class="status">
<div class="stats"><div class="st1">Pads<br>912</div><div class="st2">Vias<br>20</div><div class="st3">Track Segments<br>106</div><div class="nodes">Nodes<br>912</div></div>
<div class="coords"><span class="delta">dx 164.338000&nbsp; dy 59.563000&nbsp; dist 174.799</span><span class="unit">mm</span></div>
<svg class="grip" width="16" height="16" viewBox="0 0 16 16"><path d="M0 16L16 0M4.500 16L16 4.500M9 16l7-7M13 16l3-3" stroke="#8f8e88" stroke-width="1.200"/><path d="M1.500 16L16 1.500M6 16L16 6M10.500 16l5.500-5.500" stroke="#fff"/></svg>
</footer>
</div>

<div class="menu context">
<div class="row first"><span>Select</span><em></em></div>
<div class="row"><svg class="mi"><use href="#movex"/></svg><span>Move</span><kbd>M</kbd></div>
<div class="row"><svg class="mi"><use href="#ccw"/></svg><span>Rotate Counterclockwise</span><kbd>R</kbd></div>
<div class="row"><svg class="mi"><use href="#cw"/></svg><span>Rotate Clockwise</span><kbd>Shift+R</kbd></div>
<div class="row"><svg class="mi"><use href="#flip"/></svg><span>Flip</span><kbd>F</kbd></div>
<div class="row"><svg class="mi"><use href="#bin"/></svg><span>Delete</span><kbd>BackSpace</kbd></div>
<div class="row"><svg class="mi"><use href="#movey"/></svg><span>Move Exactly...</span><kbd>Ctrl+M</kbd></div>
<div class="row"><svg class="mi"><use href="#posrel"/></svg><span>Position Relative To...</span><kbd>Ctrl+R</kbd></div>
<div class="row"><svg class="mi"><use href="#dup"/></svg><span>Duplicate</span><kbd>Ctrl+D</kbd></div>
<div class="row"><svg class="mi"><use href="#array"/></svg><span>Create Array...</span><kbd>Ctrl+N</kbd></div>
<div class="row"><svg class="mi"><use href="#copy"/></svg><span>Copy</span><kbd>Ctrl+C</kbd></div>
<div class="row"><svg class="mi"><use href="#cut"/></svg><span>Cut</span><kbd>Ctrl+X</kbd></div>
<div class="row"><svg class="mi"><use href="#paste"/></svg><span>Paste</span><kbd>Ctrl+V</kbd></div>
<hr>
<div class="row hot"><svg class="mi"><use href="#al"/></svg><span>Align/Distribute</span><em></em></div>
<hr>
<div class="row"><svg class="mi"><use href="#zcen"/></svg><span>Center</span><kbd>F4</kbd></div>
<div class="row"><svg class="mi"><use href="#zin"/></svg><span>Zoom In</span><kbd>F1</kbd></div>
<div class="row"><svg class="mi"><use href="#zout"/></svg><span>Zoom Out</span><kbd>F2</kbd></div>
<div class="row"><svg class="mi"><use href="#zfit"/></svg><span>Zoom Auto</span><kbd>Home</kbd></div>
</div>
<div class="menu submenu">
<div class="row"><svg class="mi"><use href="#at"/></svg><span>Align to Top</span></div>
<div class="row"><svg class="mi"><use href="#abt"/></svg><span>Align to Bottom</span></div>
<div class="row"><svg class="mi"><use href="#al"/></svg><span>Align to Left</span></div>
<div class="row"><svg class="mi"><use href="#ar"/></svg><span>Align to Right</span></div>
<div class="row hot"><svg class="mi"><use href="#am"/></svg><span>Align to Middle</span></div>
<div class="row"><svg class="mi"><use href="#ac"/></svg><span>Align to Center</span></div>
</div>
<svg class="cursor" width="12" height="18" viewBox="0 0 12 18"><path d="M1 1v13l3-3 3 6 2-1-3-5.500h5z" fill="#111" stroke="#eee" stroke-width=".8"/></svg>
</body>
</html>
```
FILE: styles.css
```
* { box-sizing: border-box; }
body { margin: 0; width: 1446px; height: 923px; overflow: hidden; background: #000; font: 13px/16px "DejaVu Sans", sans-serif; color: #1a1a1a; }
.sprite { display: block; height: 0; }
.window { width: 1446px; height: 923px; display: flex; flex-direction: column; background: #dcdbd6; border: solid #000; border-width: 1px 2px 1px 1px; border-radius: 5px 5px 0 0; overflow: hidden; }
.titlebar { height: 14px; display: flex; background: #dcdbd6; flex: none; }
.corner { width: 18px; flex: none; }
.corner.right { width: 49px; }
.corner svg { display: block; }
.title { flex: 1; background: #4b6983; border: solid #2d4254; border-width: 0 1px 1px; border-radius: 0 0 6px 6px; color: #fff; font: bold 11px/14px "DejaVu Sans", sans-serif; letter-spacing: -.2px; text-align: center; white-space: nowrap; }
.menubar { height: 25px; flex: none; display: flex; gap: 14.200px; padding: 5px 0 0 11px; border-bottom: 1px solid #a3a29c; }
.menubar u { text-underline-offset: 2px; }
.toolbar { height: 36px; flex: none; display: flex; align-items: center; padding: 0 0 0 6px; }
.toolbar.second { height: 36px; padding-bottom: 1px; }
.toolbar .ic { width: 34px; height: 26px; flex: none; }
.toolbar i { width: 9px; height: 24px; flex: none; background: linear-gradient(#b5b4ae, #b5b4ae) center/1px 100% no-repeat; }
.toolbar i.gap { width: 11px; background: none; }
.combo { height: 27px; display: flex; align-items: center; border: 1px solid; border-color: #9e9d96 #8f8e88 #8f8e88 #9e9d96; background: linear-gradient(#f2f1ee, #d8d7d2); box-shadow: inset 1px 1px #fff; padding-left: 5px; flex: none; white-space: nowrap; }
.combo span { flex: 1; }
.combo em { width: 20px; height: 19px; border-left: 1px solid #9e9d96; display: flex; align-items: center; padding-left: 3px; }
.combo em::after { content: ""; border: solid transparent; border-width: 5px 4.500px 0; border-top-color: #000; }
.layer { width: 150px; padding-left: 4px; margin-right: 1px; }
.track { width: 223px; margin: 0 2px 0 1px; }
.viasel { width: 342px; margin-right: 10px; }
.grid { width: 229px; margin-left: 1px; }
.zoomsel { width: 124px; margin-left: -1px; }
.swatch { display: block; width: 16px; height: 11px; border: 1px solid #000; flex: none; }
.layer .swatch { width: 14px; height: 14px; margin-right: 2px; }
.fcu { background: #840000; } .gnd { background: #c28311; } .mag { background: #c200c2; } .grn { background: #008400; } .pur { background: #840084; } .teal { background: #008484; } .gry { background: #c2c2c2; } .blu { background: #000084; } .yel { background: #c2c200; } .dgr { background: #848484; }
.work { flex: none; height: 759px; display: flex; }
.tools { width: 38px; padding: 4px 2px 0 4px; display: flex; flex-direction: column; align-items: center; }
.tools .ic { width: 32px; height: 32px; margin: 1px 0; padding: 2px; border: 1px solid transparent; flex: none; overflow: hidden; }
.tools .ic.on { border-color: #4b6983; background: #c8d0d8; }
.tools i { height: 9px; width: 24px; flex: none; background: linear-gradient(#b0afaa, #b0afaa) center/100% 1px no-repeat; }
.tools.rt { width: 40px; padding: 4px 7px 0 1px; }
.serif { font-family: "Liberation Serif", serif; }
.view { width: 1160px; display: flex; flex-direction: column; flex: none; }
.board { display: block; }
.silk text { font: 200 121px "DejaVu Sans", sans-serif; fill: #008484; stroke: #008484; stroke-width: 9px; stroke-linejoin: round; }
.silk text.pale { fill: #84c2c2; stroke: #84c2c2; }
.pads text { font-family: "DejaVu Sans Mono", monospace; font-size: 26px; fill: #fff; stroke: #fff; stroke-width: .3px; text-anchor: middle; }
.pads.sel text { fill: #fff0ea; stroke: #fff0ea; }
.pads text.tiny { font-size: 12px; fill: #f0dcdc; stroke: none; }
.pads text.small { font-size: 15px; text-anchor: start; stroke: none; letter-spacing: -.6px; }
.pads text.micro { font-size: 5px; font-weight: bold; text-anchor: start; stroke: none; }
.hscroll { height: 18px; display: flex; padding: 3px 0 1px; align-items: center; }
.hscroll span { flex: 1; height: 12px; background: #c3c2bd; }
.sb { width: 14px; height: 14px; flex: none; border: 1px solid #9e9d96; background: #e9e8e5; display: flex; align-items: center; justify-content: center; }
.sb::after { content: ""; border: 4px solid transparent; }
.l::after { border-right-color: #000; border-left-width: 0; } .r::after { border-left-color: #000; border-right-width: 0; }
.u::after { border-bottom-color: #000; border-top-width: 0; } .d::after { border-top-color: #000; border-bottom-width: 0; }
.vscroll { width: 18px; height: 741px; padding: 0 1px 0 3px; display: flex; flex-direction: column; align-items: center; flex: none; }
.vscroll span { flex: 1; width: 12px; background: #c3c2bd; display: flex; flex-direction: column; align-items: center; padding-top: 360px; }
.thumb { width: 14px; height: 21px; border: 1px solid #9e9d96; background: #e6e5e1; flex: none; }
.visibles { width: 186px; display: flex; flex-direction: column; }
.visibles h2 { margin: 0; height: 16px; font: 11px/15px "DejaVu Sans", sans-serif; padding-left: 3px; background: linear-gradient(#bab9b4, #d8d7d2); }
.tabs { display: flex; align-items: flex-end; height: 37px; padding-left: 11px; position: relative; z-index: 1; }
.tab { width: 60px; height: 24px; margin-bottom: 1px; border: 1px solid #8f8e88; border-bottom: 0; border-left: 0; background: #c3c2bd; padding: 5px 0 0 4px; }
.tab.active { width: 52px; height: 29px; border-left: 1px solid #9e9d96; background: #dcdbd6; margin-bottom: 0; padding: 6px 0 0 4px; }
.layers { list-style: none; margin: -1px 0 0 7px; width: 173px; height: 701px; border: 1px solid #9e9d96; box-shadow: inset 1px 1px #fff; padding: 5px 0 0 8px; }
.layers li { height: 23px; display: flex; align-items: center; padding-left: 4px; }
.layers li.cur { padding-left: 0; }
.layers li.cur::before { content: ""; border: 4px solid transparent; border-right-width: 0; border-left-color: #2020f0; }
.ck { width: 11px; height: 11px; margin: -2px 13px 0 3px; background: #fff; border: 1px solid #9e9d96; text-decoration: none; display: block; flex: none; }
.ck:not(.off)::after { content: ""; display: block; width: 4px; height: 6px; margin: 0 0 0 2px; border: solid #000; border-width: 0 2px 2px 0; transform: skewX(-20deg) rotate(20deg); }
.status { flex: 1; display: flex; position: relative; color: #111; overflow: hidden; }
.stats { display: flex; line-height: 15px; color: #004b00; width: 862px; flex: none; padding-left: 15px; margin-top: -1px; white-space: nowrap; }
.st1 { width: 67px; } .st2 { width: 65px; } .st3 { width: 140px; }
.nodes { color: #004b4b; }
.coords { display: flex; padding: 32px 0 0 19px; flex: 1; white-space: nowrap; }
.delta { width: 329px; font-size: 12.400px; }
.grip { position: absolute; right: 2px; bottom: 3px; }
.menu { position: absolute; background: #eee; border: 1px solid #9b9b98; color: #3a3a3a; box-shadow: 0 3px 10px rgba(0,0,0,.45); overflow: hidden; white-space: nowrap; }
.context { left: 350px; top: 373px; width: 323px; height: 560px; padding: 0 1px; }
.submenu { left: 671px; top: 749px; width: 223px; height: 184px; padding: 2px 1px; }
.row { height: 31px; display: flex; align-items: center; padding: 0 8px 0 5px; }
.row.first { height: 21px; padding: 2px 8px 0 36px; }
.row span { flex: 1; }
.row kbd { font: inherit; }
.mi { width: 26px; height: 26px; margin: -1px 5px 0 0; flex: none; }
.row em { border: solid transparent; border-width: 5px 0 5px 6px; border-left-color: #222; margin: -2px -2px 0 0; }
.hot { background: #eeeae5; color: #000; }
.menu hr { height: 2px; margin: 3px 5px; border: 0; border-top: 1px solid #9e9e9a; background: #fff; }
.cursor { position: absolute; left: 715px; top: 885px; }
```
